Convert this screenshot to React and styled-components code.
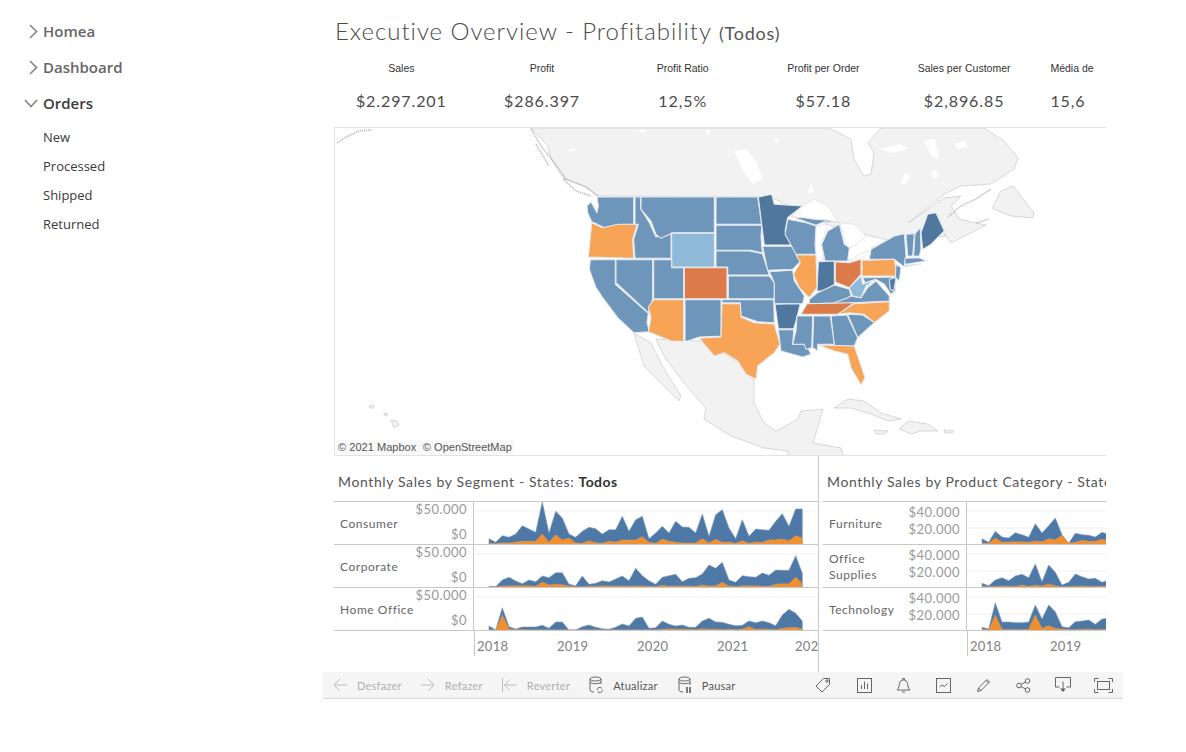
import React from 'react';
import styled, { createGlobalStyle } from 'styled-components';

const Global = createGlobalStyle`
  html, body { margin: 0; padding: 0; background: #fff; }
  body { font-family: "Lato", "Liberation Sans", sans-serif; }
`;

const Page = styled.div`
  display: grid;
  grid-template-columns: 323px 800px;
  width: 1186px;
  height: 752px;
  overflow: hidden;
`;

const Sidebar = styled.nav`
  display: flex;
  flex-direction: column;
  padding-top: 13px;
  font-family: "Open Sans", "Noto Sans", sans-serif;
`;

const NavGroup = styled.div`
  display: flex;
  align-items: center;
  height: 36px;
  font-size: 15px;
  font-weight: 600;
  color: ${p => (p.$open ? '#3c3c3c' : '#666')};
`;

const NavIcon = styled.span`
  display: flex;
  justify-content: flex-end;
  align-items: center;
  width: 38px;
  margin-right: 5px;
  svg { display: block; }
`;

const NavSub = styled.div`
  height: 29px;
  line-height: 29px;
  padding-left: 43px;
  font-size: 13px;
  color: #3a3a3a;
  &:first-of-type { margin-top: 0; }
`;

const SubList = styled.div`
  padding-top: 2px;
`;

const Main = styled.main`
  display: flex;
  flex-direction: column;
`;

const Content = styled.div`
  width: 772px;
  margin-left: 11px;
  overflow: hidden;
`;

const Title = styled.h1`
  margin: 0;
  height: 50px;
  padding: 15px 0 0 1px;
  box-sizing: border-box;
  font-weight: 300;
  font-size: 24px;
  line-height: 32px;
  letter-spacing: 0.95px;
  color: #4a4a4a;
  white-space: nowrap;
  small { font-size: 18px; letter-spacing: 0.8px; font-weight: 400; color: #555; }
`;

const KpiRow = styled.div`
  display: flex;
  margin-left: -3px;
  height: 77px;
`;

const Kpi = styled.div`
  flex: 0 0 ${p => (p.$clip ? '46px' : '140.7px')};
  width: ${p => (p.$clip ? '46px' : '140.7px')};
  margin-left: ${p => (p.$clip ? '16px' : '0')};
  overflow: hidden;
  display: flex;
  flex-direction: column;
  align-items: ${p => (p.$clip ? 'flex-start' : 'center')};
  white-space: nowrap;
`;

const KpiLabel = styled.div`
  height: 40px;
  padding-top: 12px;
  box-sizing: border-box;
  font-family: "Liberation Sans", Arial, sans-serif;
  font-size: 10.5px;
  line-height: 13px;
  color: #333;
`;

const KpiValue = styled.div`
  font-size: 16px;
  line-height: 22px;
  letter-spacing: 0.9px;
  color: #4a4a4a;
`;

const MapFrame = styled.div`
  position: relative;
  height: 329px;
  box-sizing: border-box;
  border: 1px solid #e3e3e3;
  border-right: none;
  overflow: hidden;
  svg { display: block; }
`;

const Attribution = styled.div`
  position: absolute;
  left: 1px;
  bottom: 0;
  padding: 0 2px;
  font-family: "Liberation Sans", Arial, sans-serif;
  font-size: 11px;
  line-height: 15px;
  color: #555;
  background: #f8f8f8;
  word-spacing: 0.2px;
`;

const Panels = styled.div`
  display: flex;
  height: 216px;
`;

const Panel = styled.section`
  flex: 0 0 ${p => p.$w}px;
  width: ${p => p.$w}px;
  overflow: hidden;
  border-right: ${p => (p.$divider ? '1px solid #c8c8c8' : 'none')};
  box-sizing: border-box;
`;

const PanelTitle = styled.h2`
  margin: 0;
  height: 45px;
  padding: 16px 0 0 ${p => p.$pad}px;
  box-sizing: border-box;
  font-size: 14px;
  line-height: 20px;
  font-weight: 400;
  letter-spacing: 0.62px;
  color: #555;
  white-space: nowrap;
  b { font-weight: 700; color: #333; letter-spacing: 0.4px; }
`;

const Rows = styled.div`
  border-top: 1px solid #c8c8c8;
  margin-left: ${p => p.$inset}px;
`;

const Row = styled.div`
  display: flex;
  height: 43px;
  box-sizing: border-box;
  border-bottom: 1px solid #c8c8c8;
`;

const RowName = styled.div`
  flex: 0 0 ${p => p.$w}px;
  box-sizing: border-box;
  padding: ${p => p.$top}px 0 0 6px;
  font-size: 12px;
  line-height: 16px;
  letter-spacing: 0.55px;
  color: #666;
`;

const RowAxis = styled.div`
  flex: 1;
  display: flex;
  flex-direction: column;
  align-items: flex-end;
  padding: 0 6px 0 0;
  border-right: 1px solid #c8c8c8;
  font-size: 13px;
  line-height: 15px;
  letter-spacing: 0.45px;
  color: #999;
`;

const AxisTick = styled.span`
  display: block;
  margin-top: ${p => p.$top}px;
`;

const Plot = styled.svg`
  flex: 0 0 ${p => p.$w}px;
  display: block;
`;

const Years = styled.div`
  display: flex;
  height: 25px;
  margin-left: ${p => p.$inset}px;
`;

const YearsGap = styled.div`
  flex: 0 0 ${p => p.$w}px;
  border-right: 1px solid #c8c8c8;
  box-sizing: border-box;
`;

const Year = styled.span`
  flex: 0 0 ${p => p.$w}px;
  box-sizing: border-box;
  padding: 7px 0 0 ${p => p.$pad}px;
  font-size: 13px;
  line-height: 16px;
  letter-spacing: 0.3px;
  color: #808080;
  white-space: nowrap;
`;

const Toolbar = styled.div`
  display: flex;
  align-items: center;
  height: 27px;
  margin-top: 0;
  padding-left: 10px;
  box-sizing: border-box;
  background: #f5f5f5;
  border-bottom: 1px solid #d9d9d9;
  font-size: 11px;
  letter-spacing: 0.25px;
`;

const ToolItem = styled.span`
  display: flex;
  align-items: center;
  gap: 10px;
  margin-right: ${p => p.$gap}px;
  color: ${p => (p.$off ? '#b0b0b0' : '#555')};
  svg { display: block; flex: none; }
`;

const ToolIcons = styled.div`
  display: flex;
  margin-left: auto;
`;

const IconButton = styled.span`
  display: flex;
  justify-content: center;
  align-items: center;
  width: ${p => p.$w || 40}px;
  height: 26px;
  svg { display: block; }
`;

/* ---------- map data (coordinates in a 3x grid over the US area) ---------- */
const BASE = '#6e96bb', DARK = '#50789f', LIGHT = '#8fb9d9', ORANGE = '#f7a457', RUST = '#dc7a49';

const STATES = [
  [BASE, '78,75 90,62 108,95 112,75 108,48 218,48 218,130 170,132 130,140 100,125 92,122 80,95'],
  [ORANGE, '92,125 125,140 170,130 228,130 215,175 218,232 82,228 88,170'],
  [BASE, '222,48 238,48 240,85 265,125 285,168 330,158 330,232 222,232 218,175 232,130 222,130'],
  [BASE, '240,48 460,48 460,155 332,155 330,158 300,172 285,160 270,120 240,85'],
  [LIGHT, '332,157 460,157 460,258 332,258'],
  [BASE, '465,48 590,48 602,130 465,130'],
  [BASE, '465,133 602,133 600,170 604,215 570,208 465,208'],
  [BASE, '465,210 565,210 604,218 625,282 500,282 500,258 465,258'],
  [BASE, '502,285 625,285 640,305 640,353 502,353'],
  [RUST, '370,260 498,260 498,353 370,353'],
  [BASE, '278,236 332,236 332,260 368,260 368,353 278,353'],
  [BASE, '165,236 275,236 275,353 262,395 165,305'],
  [BASE, '88,236 163,236 163,310 262,397 258,425 265,452 218,455 170,410 125,350 105,320 85,265'],
  [ORANGE, '278,356 368,356 368,481 330,480 262,452 270,410 262,378'],
  [BASE, '372,356 480,356 480,465 415,468 380,480 372,480'],
  [BASE, '483,356 638,356 640,425 590,422 540,405 538,365 483,365'],
  [ORANGE, '483,368 538,368 540,408 580,425 640,430 657,490 640,515 590,555 585,595 555,580 530,540 490,515 460,525 415,472 480,468'],
  [DARK, '592,48 632,40 640,70 725,75 680,110 672,150 700,192 610,192 602,130'],
  [BASE, '605,196 702,196 720,240 695,265 620,268'],
  [BASE, '625,272 695,268 700,300 730,345 725,368 640,368 640,305'],
  [DARK, '642,370 718,368 705,420 698,443 652,443'],
  [BASE, '652,446 698,446 695,490 735,490 750,520 725,528 660,510'],
  [BASE, '680,115 735,125 765,135 762,190 765,220 705,220 672,160'],
  [BASE, '695,108 735,122 765,133 790,122 832,125 800,118 760,115 730,110'],
  [BASE, '792,240 782,190 800,150 835,130 850,190 865,200 860,240'],
  [ORANGE, '705,222 765,222 768,320 745,350 715,320 697,280 718,245'],
  [DARK, '772,242 820,240 820,310 790,330 768,330'],
  [RUST, '823,242 865,245 900,235 900,280 865,320 823,303'],
  [BASE, '925,235 930,205 1000,165 1030,158 1035,225 1030,258 1000,235'],
  [ORANGE, '903,238 925,238 1000,235 1008,285 903,285'],
  [BASE, '745,355 770,335 820,312 865,325 870,345 840,365 745,368'],
  [BASE, '812,368 860,350 870,345 900,350 920,320 945,300 985,345 985,360'],
  [BASE, '905,290 1005,288 1003,330 990,340 970,310 945,295 912,305'],
  [LIGHT, '865,320 900,285 905,310 945,295 915,315 900,350 875,345'],
  [RUST, '720,400 738,368 880,365 830,400'],
  [ORANGE, '830,400 880,368 985,362 985,390 940,425 910,400 865,395'],
  [BASE, '860,400 905,402 940,425 890,470'],
  [BASE, '810,405 858,402 890,470 880,495 820,495'],
  [BASE, '758,405 808,405 820,490 770,490 770,510 755,500'],
  [BASE, '708,405 755,405 752,500 735,505 730,490 695,490 705,450'],
  [ORANGE, '772,492 880,495 885,510 912,590 900,612 870,560 860,520 820,510'],
  [DARK, '1080,155 1100,100 1125,95 1150,150 1110,190 1085,205'],
  [BASE, '1035,160 1060,158 1055,225 1040,225'],
  [BASE, '1062,158 1078,140 1080,205 1075,225 1058,225'],
  [BASE, '1032,232 1075,230 1095,240 1032,250'],
  [BASE, '1032,253 1078,250 1082,248 1032,258'],
  [BASE, '1005,250 1020,260 1015,300 1003,290'],
  [DARK, '985,295 1005,290 998,330 988,325'],
];

const LAKES = [
  '690,108 725,75 760,55 800,75 832,122 800,118 760,115 735,122 700,105',
  '765,135 800,130 782,190 788,240 765,240 762,195',
  '835,125 880,130 915,165 880,195 865,200 850,185 845,150',
  '860,240 905,215 925,210 900,235',
  '930,200 975,180 985,175 955,205',
];

const LAND = [
  '530,127 547,145 550,158 563,178 583,185 597,195 770,196 830,225 890,240 905,240 945,235 943,232 950,242 985,224 975,222 958,218 950,205 960,195 943,197 907,222 945,192 960,185 990,183 1013,168 1017,157 1003,140 983,127 880,127 867,142 873,152 870,173 863,175 853,158 850,138 828,127',
  '992,205 1000,190 1012,185 1033,212 1032,217 1010,215 992,208',
  '655,338 663,355 683,382 705,407 703,418 730,435 763,447 787,450 787,456 843,456 840,447 812,442 818,422 822,408 800,410 797,418 775,430 763,422 753,402 753,380 745,365 700,340',
  '633,332 643,365 663,385 678,400 680,395 663,368 650,342',
  '833,407 847,398 863,400 880,412 900,418 887,420 870,413 850,407',
  '898,428 907,420 927,423 937,430 920,430 910,433',
  '873,429 887,430 884,433 875,433',
  '943,429 953,430 951,432 944,432',
  '390,419 396,420 398,424 393,427',
  '383,412 387,413 386,415 383,414',
  '368,405 372,404 373,407 369,407',
];

const SNOW = [
  '733,150 745,148 755,160 762,178 752,183 742,170',
  '878,148 900,143 907,148 890,152',
  '923,140 934,138 938,158 930,154',
  '953,143 963,140 967,146 957,148',
  '900,183 904,172 910,174 905,183',
  '930,172 935,168 937,176 932,178',
  '807,190 810,183 813,190 809,193',
  '772,140 778,137 777,142',
  '636,129 646,129 642,132',
  '704,130 708,128 708,134',
  '565,150 575,147 572,150',
];

const COAST = [
  '336,142 345,136 358,130 370,129',
  '530,128 540,145 552,160 565,178 585,186 597,195',
  '562,178 575,190 590,195',
  '535,143 545,160 548,165',
  '947,216 960,205 975,198 990,188',
  '975,222 988,218',
];

const MapView = () => (
  <svg width="771" height="327" viewBox="334 127 771 327">
    <rect x="334" y="127" width="771" height="327" fill="#fff" />
    {LAND.map(d => <polygon key={d} points={d} fill="#f2f2f2" stroke="#c9c9c9" strokeWidth="0.7" />)}
    {SNOW.map(d => <polygon key={d} points={d} fill="#fff" />)}
    {COAST.map(d => <polyline key={d} points={d} fill="none" stroke="#bdbdbd" strokeWidth="1.6" strokeDasharray="1.2 0.8" />)}
    <g transform="translate(560 180) scale(0.33333)">
      {LAKES.map(d => <polygon key={d} points={d} fill="#fff" stroke="#cfcfcf" strokeWidth="1.5" />)}
      {STATES.map(([c, d]) => <polygon key={d} points={d} fill={c} stroke="#e4e9ee" strokeWidth="3.2" strokeLinejoin="round" />)}
    </g>
  </svg>
);

/* ---------- charts ---------- */
const fromTop = (base, arr) => arr.map(v => base - v);

const SEGMENTS = [
  {
    name: 'Consumer', top: 14,
    blue: fromTop(238, [222,233,213,218,208,183,193,203,112,205,140,160,208,218,200,188,192,208,195,195,155,200,165,155,222,205,185,205,170,187,188,205,148,215,150,135,190,222,165,215,193,195,197,170,147,185,133,133]),
    orange: [2,1,4,3,6,8,8,8,30,5,28,12,18,3,2,10,4,2,8,6,12,12,12,22,5,2,15,8,5,3,3,3,16,4,14,5,6,2,10,2,6,5,12,13,15,10,25,18],
    grid: [9],
  },
  {
    name: 'Corporate', top: 14,
    blue: fromTop(366, [364,365,345,337,348,356,345,350,333,338,323,323,358,362,333,358,355,347,351,342,333,347,310,332,347,358,337,332,328,350,340,338,327,300,310,292,345,352,332,335,337,324,331,315,316,316,272,325]),
    orange: [0,0,3,4,4,4,4,2,15,6,8,7,3,1,1,2,2,4,3,3,3,3,3,3,2,1,5,3,3,3,3,2,6,3,4,14,3,1,4,4,4,2,2,8,10,10,30,10],
    grid: [9],
  },
  {
    name: 'Home Office', top: 14,
    blue: fromTop(495, [483,495,428,485,492,486,486,486,481,490,471,471,495,495,485,480,487,491,493,487,477,483,460,456,490,488,468,478,483,480,487,487,468,460,471,472,478,482,481,468,473,468,473,482,450,433,445,468]),
    orange: [0,0,45,3,1,1,0,0,0,0,0,0,0,0,0,0,0,0,0,0,0,0,0,0,0,0,2,3,3,2,2,1,4,2,3,1,3,1,3,10,2,3,2,1,5,7,8,3],
    grid: [9],
  },
];

const CATEGORIES = [
  {
    name: 'Furniture', top: 14,
    blue: fromTop(238, [222,233,200,217,220,204,210,218,177,205,183,160,210,236,206,210,212,217,203,210]),
    orange: [2,2,18,5,6,7,7,5,9,7,16,13,26,3,5,11,8,8,14,10],
    grid: [9, 26],
  },
  {
    name: 'Office\nSupplies', top: 6,
    blue: fromTop(366, [355,362,345,338,347,333,328,338,297,350,300,322,360,352,327,335,342,340,352,345]),
    orange: [1,1,2,3,2,2,6,2,6,3,9,4,1,1,2,3,2,2,2,3],
    grid: [9, 26],
  },
  {
    name: 'Technology', top: 14,
    blue: fromTop(495, [487,492,413,471,471,473,473,471,420,462,420,440,485,488,470,468,465,478,462,460]),
    orange: [2,0,45,2,1,1,1,2,45,5,13,5,3,1,1,2,3,1,2,2],
    grid: [9, 26],
  },
];

const area = (vals, x0, h) => {
  const pts = vals.map((v, i) => `${(x0 + i * 6.667).toFixed(1)},${(h - v / 3).toFixed(1)}`);
  const lastX = (x0 + (vals.length - 1) * 6.667).toFixed(1);
  return `${x0},${h} ${pts.join(' ')} ${lastX},${h}`;
};

const ChartPlot = ({ w, x0, blue, orange, grid }) => (
  <Plot $w={w} width={w} height="42" viewBox={`0 0 ${w} 42`}>
    {grid.map(y => <line key={y} x1="0" x2={w} y1={y} y2={y} stroke="#efefef" />)}
    <polygon points={area(blue, x0, 42)} fill="#4e79a7" stroke="#7d9cbf" strokeWidth="0.6" />
    <polygon points={area(orange, x0, 42)} fill="#f28e2b" stroke="#d9a46e" strokeWidth="0.4" />
  </Plot>
);

const ChartRow = ({ row, nameW, plotW, x0, ticks, tickTops }) => (
  <Row>
    <RowName $w={nameW} $top={row.top}>
      {row.name.split('\n').map(t => <div key={t}>{t}</div>)}
    </RowName>
    <RowAxis>
      {ticks.map((t, i) => <AxisTick key={t} $top={tickTops[i]}>{t}</AxisTick>)}
    </RowAxis>
    <ChartPlot w={plotW} x0={x0} blue={row.blue} orange={row.orange} grid={row.grid} />
  </Row>
);

/* ---------- icons ---------- */
const Svg = ({ w = 18, h = 18, c = '#666', children }) => (
  <svg width={w} height={h} viewBox={`0 0 ${w} ${h}`} fill="none" stroke={c} strokeWidth="1">{children}</svg>
);

const Chevron = ({ open }) => (
  <svg width={open ? 14 : 9} height={open ? 9 : 15} viewBox={open ? '0 0 14 9' : '0 0 9 15'} fill="none" stroke="#888" strokeWidth="1.7">
    {open ? <path d="M1 1l6 6.5L13 1" /> : <path d="M1 1l6.5 6.5L1 14" />}
  </svg>
);

const BackIcon = () => <Svg w={14} h={16} c="#bdbdbd"><path d="M14 8H1M7 2L1 8l6 6" /></Svg>;
const ForwardIcon = () => <Svg w={14} h={16} c="#bdbdbd"><path d="M0 8h13M7 2l6 6-6 6" /></Svg>;
const RevertIcon = () => <Svg w={15} h={16} c="#bdbdbd"><path d="M.5 1v14M15 8H2.5M8 2.500L2.500 8 8 13.500" /></Svg>;
const DbRefreshIcon = () => (
  <Svg w={14} h={18} c="#666">
    <ellipse cx="6.500" cy="3" rx="5.500" ry="2" />
    <path d="M1 3v11c0 1 1.500 2 4 2M12 3v5M1 6c1 1.300 3 1.700 5.500 1.700S11 7.300 12 6" />
    <path d="M8 14a2.800 2.800 0 0 1 5-1.500M13.500 14a2.800 2.800 0 0 1-5 1.500" />
  </Svg>
);
const DbPauseIcon = () => (
  <Svg w={14} h={18} c="#666">
    <ellipse cx="6.500" cy="3" rx="5.500" ry="2" />
    <path d="M1 3v11c0 1 1.500 2 4 2M12 3v6M1 6c1 1.300 3 1.700 5.500 1.700S11 7.300 12 6" />
    <path d="M9 11v6M12 11v6" strokeWidth="1.700" />
  </Svg>
);
const TagIcon = () => (
  <Svg w={16} h={16}><path d="M8.500 1.500h6v6L7 15 1 9z" /><circle cx="12" cy="4" r="1.200" /></Svg>
);
const BarsIcon = () => (
  <Svg w={15} h={15}><rect x=".5" y=".5" width="14" height="14" /><path d="M4.500 11V7M7.500 11V3.500M10.500 11V5.500" /></Svg>
);
const BellIcon = () => (
  <Svg w={15} h={16}><path d="M1 13c2-2 2-4 2.500-6.500C4 4 5.500 3 7.500 3s3.500 1 4 3.500c.5 2.500.5 4.500 2.500 6.500z" /><path d="M6.500 3V1.500h2V3M6 15h3" /></Svg>
);
const LineIcon = () => (
  <Svg w={15} h={15}><rect x=".5" y=".5" width="14" height="14" /><path d="M3.500 9l2.500-2 2.500 1.500L11.500 5.500" /></Svg>
);
const PencilIcon = () => (
  <Svg w={15} h={15}><path d="M1.500 13.500l1-3.500L11 1.500l2.500 2.500L5 12.500zM2.500 10l3 3M10 2.500l2.500 2.500" /></Svg>
);
const ShareIcon = () => (
  <Svg w={15} h={15}>
    <circle cx="3" cy="7.500" r="2.300" /><circle cx="11.500" cy="3" r="2.300" /><circle cx="11.500" cy="12" r="2.300" />
    <path d="M5 6.400l4.500-2.400M5 8.600l4.500 2.400" />
  </Svg>
);
const DownloadIcon = () => (
  <Svg w={16} h={16}><path d="M4.500 10H.5V.5h15V10h-4M8 4.500v8" /><path d="M5 11.500h6L8 15z" fill="#666" stroke="none" /></Svg>
);
const FullIcon = () => (
  <Svg w={19} h={15}>
    <rect x="3.500" y="3.500" width="12" height="8" />
    <path d="M.5 4V.5h4M14.500.5h4V4M.5 11v3.500h4M14.500 14.500h4V11" />
  </Svg>
);

const KPIS = [
  ['Sales', '$2.297.201'],
  ['Profit', '$286.397'],
  ['Profit Ratio', '12,5%'],
  ['Profit per Order', '$57.18'],
  ['Sales per Customer', '$2,896.85'],
];

export default function App() {
  return (
    <Page>
      <Global />
      <Sidebar>
        <NavGroup><NavIcon><Chevron /></NavIcon>Homea</NavGroup>
        <NavGroup><NavIcon><Chevron /></NavIcon>Dashboard</NavGroup>
        <NavGroup $open><NavIcon><Chevron open /></NavIcon>Orders</NavGroup>
        <SubList>
          <NavSub>New</NavSub>
          <NavSub>Processed</NavSub>
          <NavSub>Shipped</NavSub>
          <NavSub>Returned</NavSub>
        </SubList>
      </Sidebar>
      <Main>
        <Content>
          <Title>Executive Overview - Profitability <small>(Todos)</small></Title>
          <KpiRow>
            {KPIS.map(([l, v]) => (
              <Kpi key={l}><KpiLabel>{l}</KpiLabel><KpiValue>{v}</KpiValue></Kpi>
            ))}
            <Kpi $clip><KpiLabel>Média de</KpiLabel><KpiValue>15,6</KpiValue></Kpi>
          </KpiRow>
          <MapFrame>
            <MapView />
            <Attribution>© 2021 Mapbox &nbsp;© OpenStreetMap</Attribution>
          </MapFrame>
          <Panels>
            <Panel $w={485} $divider>
              <PanelTitle $pad={4}>Monthly Sales by Segment - States: <b>Todos</b></PanelTitle>
              <Rows $inset={0}>
                {SEGMENTS.map(r => (
                  <ChartRow key={r.name} row={r} nameW={80} plotW={344} x0={15} ticks={['$50.000', '$0']} tickTops={[0, 10]} />
                ))}
              </Rows>
              <Years $inset={0}>
                <YearsGap $w={141} />
                {['2018', '2019', '2020', '2021'].map(y => <Year key={y} $w={80} $pad={2}>{y}</Year>)}
                <Year $w={24} $pad={0}>2022</Year>
              </Years>
            </Panel>
            <Panel $w={287}>
              <PanelTitle $pad={8}>Monthly Sales by Product Category - States: <b>Todos</b></PanelTitle>
              <Rows $inset={4}>
                {CATEGORIES.map(r => (
                  <ChartRow key={r.name} row={r} nameW={72} plotW={139} x0={15} ticks={['$40.000', '$20.000']} tickTops={[3, 2]} />
                ))}
              </Rows>
              <Years $inset={4}>
                <YearsGap $w={145} />
                <Year $w={80} $pad={2}>2018</Year>
                <Year $w={59} $pad={2}>2019</Year>
              </Years>
            </Panel>
          </Panels>
        </Content>
        <Toolbar>
          <ToolItem $off $gap={19}><BackIcon />Desfazer</ToolItem>
          <ToolItem $off $gap={19}><ForwardIcon />Refazer</ToolItem>
          <ToolItem $off $gap={19}><RevertIcon />Reverter</ToolItem>
          <ToolItem $gap={20}><DbRefreshIcon />Atualizar</ToolItem>
          <ToolItem $gap={0}><DbPauseIcon />Pausar</ToolItem>
          <ToolIcons>
            <IconButton $w={44}><TagIcon /></IconButton>
            <IconButton $w={38}><BarsIcon /></IconButton>
            <IconButton><BellIcon /></IconButton>
            <IconButton><LineIcon /></IconButton>
            <IconButton><PencilIcon /></IconButton>
            <IconButton><ShareIcon /></IconButton>
            <IconButton><DownloadIcon /></IconButton>
            <IconButton><FullIcon /></IconButton>
          </ToolIcons>
        </Toolbar>
      </Main>
    </Page>
  );
}
